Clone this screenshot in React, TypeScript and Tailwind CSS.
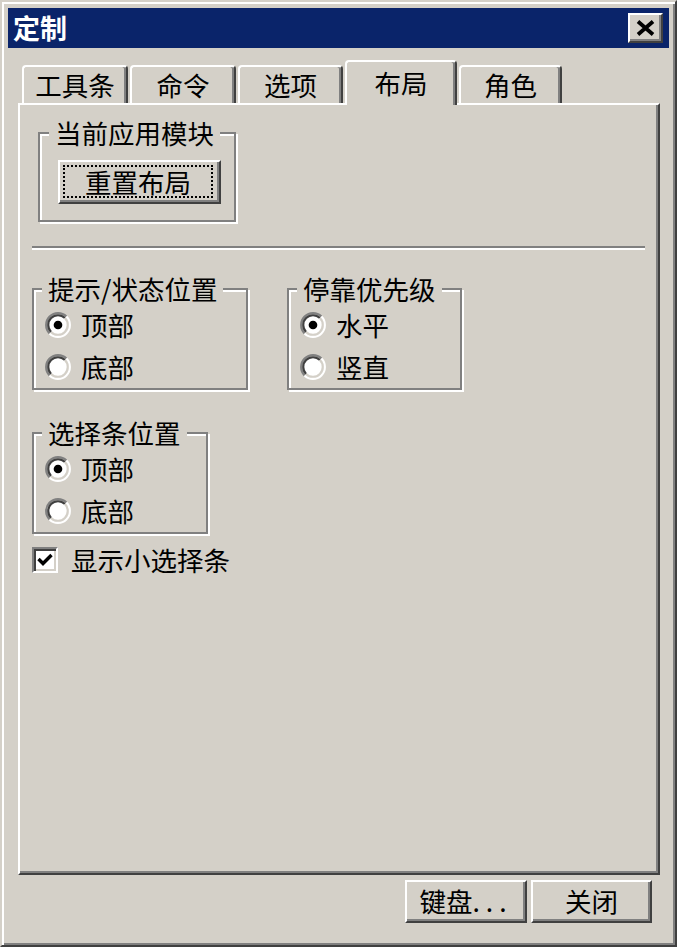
import React from 'react';

const raised =
  'border-2 border-t-white border-l-white border-r-[#404040] border-b-[#404040] shadow-[inset_-2px_-2px_0_#808080]';

function Radio({ checked }: { checked?: boolean }) {
  return (
    <svg width="26" height="26" viewBox="0 0 12 12" className="shrink-0">
      <circle cx="6" cy="6" r="5" fill="#fff" />
      <path d="M2.111 9.889 A5.5 5.5 0 0 1 9.889 2.111" fill="none" stroke="#808080" strokeWidth="1" />
      <path d="M9.889 2.111 A5.5 5.5 0 0 1 2.111 9.889" fill="none" stroke="#fff" strokeWidth="1" />
      <path d="M2.818 9.182 A4.5 4.5 0 0 1 9.182 2.818" fill="none" stroke="#404040" strokeWidth="1" />
      <path d="M9.182 2.818 A4.5 4.5 0 0 1 2.818 9.182" fill="none" stroke="#d4d0c8" strokeWidth="1" />
      {checked && <circle cx="6" cy="6" r="2" fill="#000" />}
    </svg>
  );
}

function RadioRow({ label, checked }: { label: string; checked?: boolean }) {
  return (
    <div className="flex h-[42px] items-center pl-[11px]">
      <Radio checked={checked} />
      <span className="ml-[10px] leading-[28px]">{label}</span>
    </div>
  );
}

function Group({
  title,
  className,
  legendClass = 'ml-[8px]',
  children,
}: {
  title: string;
  className: string;
  legendClass?: string;
  children: React.ReactNode;
}) {
  return (
    <div className={`border-2 border-[#808080] shadow-[inset_2px_2px_0_#fff,2px_2px_0_#fff] ${className}`}>
      <div className={`-mt-[15px] w-fit bg-[#d4d0c8] px-[6px] leading-[28px] ${legendClass}`}>{title}</div>
      {children}
    </div>
  );
}

function Tab({ label, className, active }: { label: string; className: string; active?: boolean }) {
  return (
    <div
      className={`flex items-center justify-center rounded-t-[4px] border-t-2 border-l-2 border-r-2 border-t-white border-l-white border-r-[#404040] bg-[#d4d0c8] shadow-[inset_-2px_0_0_#808080] leading-[28px] ${
        active ? 'h-[45px] pb-[2px]' : 'mb-[2px] h-[38px]'
      } ${className}`}
    >
      {label}
    </div>
  );
}

export default function App() {
  return (
    <div className="h-[947px] w-[677px] border-2 border-t-[#d4d0c8] border-l-[#d4d0c8] border-r-[#404040] border-b-[#404040] bg-[#d4d0c8] p-[6px] font-['Noto_Sans_CJK_SC',sans-serif] text-[26.5px] text-black shadow-[inset_2px_2px_0_#fff,inset_-2px_-2px_0_#808080]">
      {/* title bar */}
      <div className="flex h-[40px] items-center justify-between bg-[#0a246a] pl-[5px] pr-[6px]">
        <span className="text-[27px] font-bold leading-[30px] text-white">定制</span>
        <div className={`flex h-[30px] w-[35px] items-center justify-center bg-[#d4d0c8] ${raised}`}>
          <svg width="19" height="16" viewBox="0 0 19 16">
            <path d="M2 1.5 L17 14.5 M17 1.5 L2 14.5" stroke="#000" strokeWidth="3.8" />
          </svg>
        </div>
      </div>

      {/* tabs */}
      <div className="relative z-10 -mb-[2px] mt-[12px] flex items-end">
        <Tab label="工具条" className="ml-[14px] w-[106px]" />
        <Tab label="命令" className="ml-[2px] w-[106px]" />
        <Tab label="选项" className="ml-[2px] w-[105px]" />
        <Tab label="布局" className="ml-[2px] w-[112px]" active />
        <Tab label="角色" className="ml-[2px] w-[103px]" />
      </div>

      {/* panel */}
      <div className="ml-[10px] h-[772px] w-[642px] border-2 border-t-white border-l-white border-r-[#404040] border-b-[#404040] pl-[12px] shadow-[inset_-2px_-2px_0_#808080]">
        <Group title="当前应用模块" className="ml-[6px] mt-[27px] w-[198px] pb-[16px]" legendClass="ml-[9px]">
          <div className={`ml-[18px] mt-[13px] flex h-[44px] w-[163px] pb-[4px] pl-[3px] pr-[6px] pt-[3px] ${raised}`}>
            <div className="flex flex-1 items-center justify-center border-2 border-dotted border-black leading-[28px]">
              重置布局
            </div>
          </div>
        </Group>

        <div className="mt-[24px] h-[4px] w-[613px] border-t-2 border-b-2 border-t-[#808080] border-b-white" />

        <div className="mt-[38px] flex items-start gap-[39px]">
          <Group title="提示/状态位置" className="w-[216px]">
            <div className="mt-[1px]">
              <RadioRow label="顶部" checked />
              <RadioRow label="底部" />
            </div>
          </Group>
          <Group title="停靠优先级" className="w-[175px]">
            <div className="mt-[1px]">
              <RadioRow label="水平" checked />
              <RadioRow label="竖直" />
            </div>
          </Group>
        </div>

        <Group title="选择条位置" className="mt-[42px] w-[176px]">
          <div className="mt-[1px]">
            <RadioRow label="顶部" checked />
            <RadioRow label="底部" />
          </div>
        </Group>

        <div className="mt-[13px] flex h-[26px] items-center">
          <div className="flex h-[26px] w-[26px] items-center justify-center border-2 border-t-[#808080] border-l-[#808080] border-r-white border-b-white bg-white shadow-[inset_2px_2px_0_#404040,inset_-2px_-2px_0_#d4d0c8]">
            <svg width="16" height="14" viewBox="0 0 16 14">
              <path d="M1.5 6 L6 10.5 L14.5 2" fill="none" stroke="#000" strokeWidth="3.4" />
            </svg>
          </div>
          <span className="ml-[13px] leading-[28px]">显示小选择条</span>
        </div>
      </div>

      {/* buttons */}
      <div className="ml-[397px] mt-[5px] flex gap-[4px]">
        <div className={`flex h-[43px] w-[122px] items-center justify-center pb-[2px] leading-[28px] ${raised}`}>
          键盘<span className="tracking-[6px]">...</span>
        </div>
        <div className={`flex h-[43px] w-[121px] items-center justify-center pb-[2px] leading-[28px] ${raised}`}>关闭</div>
      </div>
    </div>
  );
}
